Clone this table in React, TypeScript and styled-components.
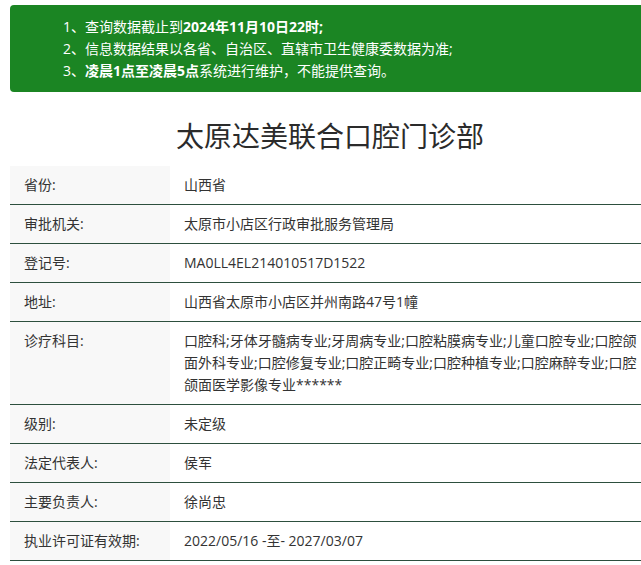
import React from "react";
import styled, { createGlobalStyle } from "styled-components";

const Global = createGlobalStyle`
  html, body { margin: 0; padding: 0; background: #fff; overflow: hidden; }
  body { font-family: "Open Sans", "Noto Sans CJK SC", sans-serif; color: #333; }
`;

const Page = styled.div`
  width: 640px;
  margin-left: 10px;
  padding-top: 5px;
`;

const Notice = styled.ol`
  list-style: none;
  margin: 0;
  padding: 11px 20px 10px 53px;
  background: #1b8523;
  border-radius: 4px;
  color: #fff;
  font-size: 14px;
  line-height: 22px;
`;

const NoticeItem = styled.li`
  white-space: nowrap;
  b { font-weight: 700; }
`;

const Title = styled.h1`
  margin: 24px 0 10px;
  text-align: center;
  font-size: 28px;
  line-height: 40px;
  font-weight: 400;
  color: #2b2b2b;
`;

const Table = styled.table`
  width: 100%;
  border-collapse: collapse;
  table-layout: fixed;
  font-size: 14px;
  line-height: 22px;
`;

const Row = styled.tr`
  border-bottom: 1px solid #2d4f3e;
`;

const Label = styled.td`
  width: 160px;
  box-sizing: border-box;
  padding: 8px 14px;
  background: #f8f8f8;
  vertical-align: top;
  color: #333;
`;

const Value = styled.td`
  padding: 8px 12px 8px 14px;
  vertical-align: top;
  color: #333;
  word-break: break-all;
`;

const rows: [string, string][] = [
  ["省份:", "山西省"],
  ["审批机关:", "太原市小店区行政审批服务管理局"],
  ["登记号:", "MA0LL4EL214010517D1522"],
  ["地址:", "山西省太原市小店区并州南路47号1幢"],
  [
    "诊疗科目:",
    "口腔科;牙体牙髓病专业;牙周病专业;口腔粘膜病专业;儿童口腔专业;口腔颌面外科专业;口腔修复专业;口腔正畸专业;口腔种植专业;口腔麻醉专业;口腔颌面医学影像专业******",
  ],
  ["级别:", "未定级"],
  ["法定代表人:", "侯军"],
  ["主要负责人:", "徐尚忠"],
  ["执业许可证有效期:", "2022/05/16 -至- 2027/03/07"],
];

export default function App() {
  return (
    <>
      <Global />
      <Page>
        <Notice>
          <NoticeItem>
            1、查询数据截止到<b>2024年11月10日22时;</b>
          </NoticeItem>
          <NoticeItem>2、信息数据结果以各省、自治区、直辖市卫生健康委数据为准;</NoticeItem>
          <NoticeItem>
            3、<b>凌晨1点至凌晨5点</b>系统进行维护，不能提供查询。
          </NoticeItem>
        </Notice>
        <Title>太原达美联合口腔门诊部</Title>
        <Table>
          <tbody>
            {rows.map(([k, v]) => (
              <Row key={k}>
                <Label>{k}</Label>
                <Value>{v}</Value>
              </Row>
            ))}
          </tbody>
        </Table>
      </Page>
    </>
  );
}
